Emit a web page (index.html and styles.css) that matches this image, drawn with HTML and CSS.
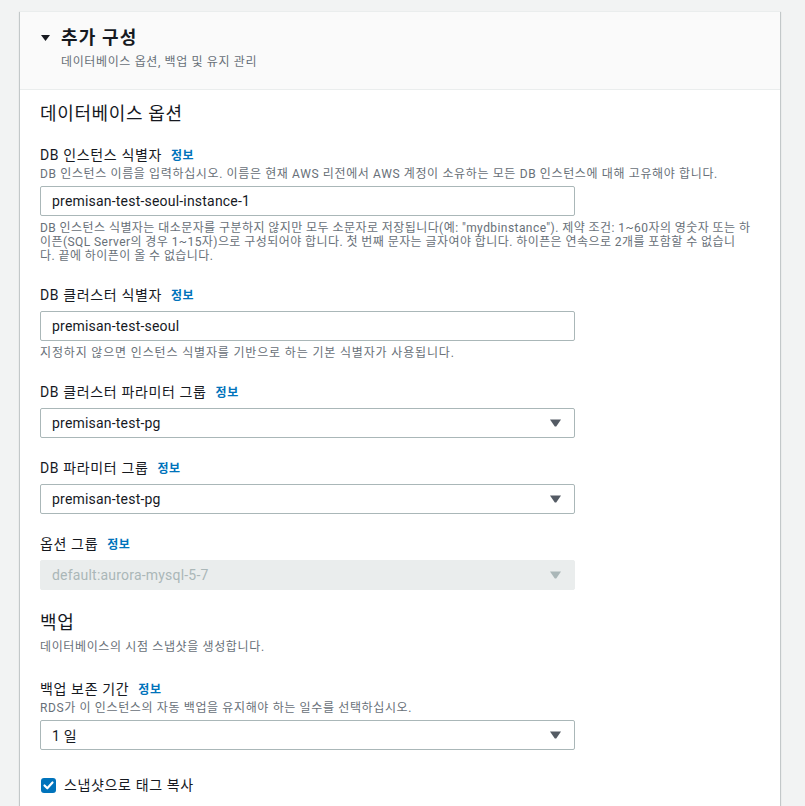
FILE: index.html
```html
<!DOCTYPE html>
<html lang="ko">
<head>
<meta charset="utf-8">
<title>추가 구성</title>
<link rel="stylesheet" href="styles.css">
</head>
<body>
<div class="page">
  <div class="card">
    <div class="card-header">
      <div class="title-row">
        <svg class="caret" width="9" height="6" viewBox="0 0 9 6"><polygon points="0,0 9,0 4.5,6" fill="#16191f"/></svg>
        <h2 class="title">추가 구성</h2>
      </div>
      <div class="subtitle">데이터베이스 옵션, 백업 및 유지 관리</div>
    </div>
    <div class="card-body">
      <h3 class="section-title">데이터베이스 옵션</h3>

      <div class="field">
        <div class="label-row">DB 인스턴스 식별자<a class="info">정보</a></div>
        <div class="desc">DB 인스턴스 이름을 입력하십시오. 이름은 현재 AWS 리전에서 AWS 계정이 소유하는 모든 DB 인스턴스에 대해 고유해야 합니다.</div>
        <div class="control after-desc">premisan-test-seoul-instance-1</div>
        <div class="helper">DB 인스턴스 식별자는 대소문자를 구분하지 않지만 모두 소문자로 저장됩니다(예: "mydbinstance"). 제약 조건: 1~60자의 영숫자 또는 하<br>이픈(SQL Server의 경우 1~15자)으로 구성되어야 합니다. 첫 번째 문자는 글자여야 합니다. 하이픈은 연속으로 2개를 포함할 수 없습니<br>다. 끝에 하이픈이 올 수 없습니다.</div>
      </div>

      <div class="field">
        <div class="label-row">DB 클러스터 식별자<a class="info">정보</a></div>
        <div class="control">premisan-test-seoul</div>
        <div class="helper wide">지정하지 않으면 인스턴스 식별자를 기반으로 하는 기본 식별자가 사용됩니다.</div>
      </div>

      <div class="field">
        <div class="label-row">DB 클러스터 파라미터 그룹<a class="info">정보</a></div>
        <div class="control select"><span>premisan-test-pg</span><svg class="arrow" width="11" height="8" viewBox="0 0 11 8"><polygon points="0,0.5 11,0.5 6.2,7.5 4.8,7.5" fill="#545b64"/></svg></div>
      </div>

      <div class="field">
        <div class="label-row">DB 파라미터 그룹<a class="info">정보</a></div>
        <div class="control select"><span>premisan-test-pg</span><svg class="arrow" width="11" height="8" viewBox="0 0 11 8"><polygon points="0,0.5 11,0.5 6.2,7.5 4.8,7.5" fill="#545b64"/></svg></div>
      </div>

      <div class="field">
        <div class="label-row">옵션 그룹<a class="info">정보</a></div>
        <div class="control select disabled"><span>default:aurora-mysql-5-7</span><svg class="arrow" width="11" height="8" viewBox="0 0 11 8"><polygon points="0,0.5 11,0.5 6.2,7.5 4.8,7.5" fill="#aab7b8"/></svg></div>
      </div>

      <h3 class="section-title backup">백업</h3>
      <div class="section-desc">데이터베이스의 시점 스냅샷을 생성합니다.</div>

      <div class="field retention">
        <div class="label-row">백업 보존 기간<a class="info">정보</a></div>
        <div class="desc">RDS가 이 인스턴스의 자동 백업을 유지해야 하는 일수를 선택하십시오.</div>
        <div class="control select after-desc"><span>1 일</span><svg class="arrow" width="11" height="8" viewBox="0 0 11 8"><polygon points="0,0.5 11,0.5 6.2,7.5 4.8,7.5" fill="#545b64"/></svg></div>
      </div>

      <div class="check-row">
        <span class="checkbox"><svg width="15" height="15" viewBox="0 0 15 15"><polyline points="3.5,7.5 6.3,10.3 11.5,4.5" fill="none" stroke="#fff" stroke-width="2.2" stroke-linecap="round" stroke-linejoin="round"/></svg></span>
        <span class="check-label">스냅샷으로 태그 복사</span>
      </div>
    </div>
  </div>
</div>
</body>
</html>
```

FILE: styles.css
```css
* { box-sizing: border-box; }

html, body {
  margin: 0;
  background: #f2f3f3;
}

body {
  font-family: Roboto, "Noto Sans CJK KR", sans-serif;
  color: #16191f;
  font-size: 14px;
  letter-spacing: 0.045em;
}

.page {
  padding: 11px 25px 0 20px;
}

.card {
  background: #ffffff;
  border-top: 1px solid #eaeded;
  box-shadow: 0 1px 1px 0 rgba(0, 28, 36, 0.3), 1px 1px 1px 0 rgba(0, 28, 36, 0.15), -1px 1px 1px 0 rgba(0, 28, 36, 0.15);
  min-height: 800px;
}

.card-header {
  background: #fafafa;
  border-bottom: 1px solid #eaeded;
  padding: 15px 20px 19px 21px;
}

.title-row {
  display: flex;
  align-items: center;
  gap: 11px;
}

.caret {
  display: block;
  flex: none;
}

.title {
  margin: 0;
  font-size: 18px;
  line-height: 22px;
  font-weight: 700;
  letter-spacing: 0.065em;
  color: #16191f;
}

.subtitle {
  margin: 5px 0 0 20px;
  font-size: 12px;
  line-height: 16px;
  color: #687078;
}

.card-body {
  padding: 13px 20px 0 20px;
}

.section-title {
  margin: 0;
  font-size: 18px;
  line-height: 22px;
  font-weight: 400;
  color: #16191f;
}

.section-title.backup {
  margin-top: 22px;
}

.section-desc {
  margin-top: 5px;
  font-size: 12px;
  line-height: 16px;
  color: #687078;
}

.field {
  margin-top: 20px;
}

.field.retention {
  margin-top: 24px;
}

.label-row {
  font-size: 14px;
  line-height: 20px;
  height: 20px;
  color: #16191f;
}

.info {
  margin-left: 9px;
  font-size: 12px;
  line-height: 1;
  font-weight: 700;
  color: #0073bb;
  text-decoration: none;
}

.desc {
  margin-top: 1px;
  font-size: 12px;
  line-height: 16px;
  color: #687078;
}

.control {
  margin-top: 6px;
  width: 535px;
  height: 30px;
  border: 1px solid #aab7b8;
  border-radius: 2px;
  padding: 0 13px 0 11px;
  display: flex;
  align-items: center;
  font-size: 14px;
  letter-spacing: 0.2px;
  color: #16191f;
  background: #ffffff;
}

.control.after-desc {
  margin-top: 4px;
}

.control.select {
  justify-content: space-between;
}

.control.disabled {
  background: #eaeded;
  border-color: #eaeded;
  color: #aab7b8;
}

.arrow {
  display: block;
  flex: none;
}

.helper {
  margin-top: 5px;
  padding-bottom: 2px;
  font-size: 12px;
  line-height: 14px;
  letter-spacing: 0.036em;
  white-space: nowrap;
  color: #687078;
}

.helper.wide {
  letter-spacing: 0.07em;
}

.check-row {
  margin-top: 25px;
  display: flex;
  align-items: center;
  gap: 8px;
  height: 20px;
  padding-left: 1px;
}

.checkbox {
  width: 15px;
  height: 15px;
  border-radius: 3px;
  background: #0073bb;
  display: block;
  flex: none;
}

.checkbox svg {
  display: block;
}

.check-label {
  font-size: 14px;
  line-height: 20px;
}
```
